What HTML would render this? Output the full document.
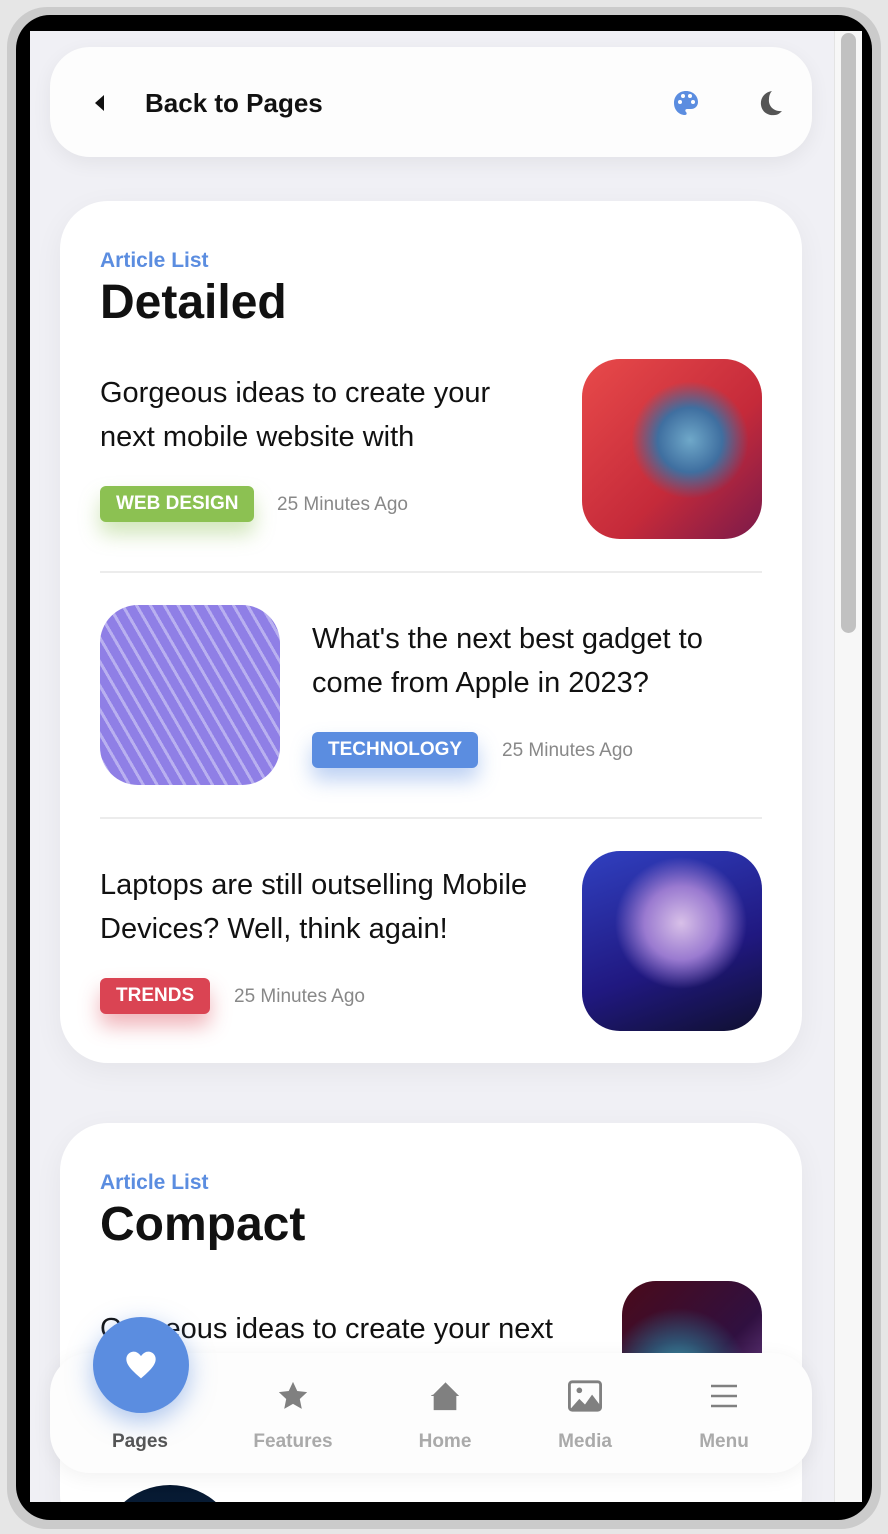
<!DOCTYPE html>
<html><head><meta charset="utf-8"><style>
*{box-sizing:border-box;margin:0;padding:0}
html,body{width:888px;height:1534px;overflow:hidden}
body{background:#e6e6e6;position:relative;font-family:"Liberation Sans",sans-serif}
.outer{position:absolute;left:7px;top:7px;width:874px;height:1522px;border-radius:40px;background:#cbcbcb}
.frame{position:absolute;left:16px;top:15px;width:856px;height:1505px;border-radius:34px;background:#000}
.screen{position:absolute;left:30px;top:31px;width:832px;height:1471px;background:#f0f0f5;overflow:hidden}
.sb{position:absolute;left:804px;top:0;width:28px;height:1471px;background:#f7f7f7;border-left:1px solid #e4e4e4;z-index:8}
.thumb{position:absolute;left:811px;top:2px;width:15px;height:600px;border-radius:8px;background:#c1c1c1;z-index:9}
.hdr{position:absolute;left:20px;top:16px;width:762px;height:110px;border-radius:40px;background:#fdfdfd;box-shadow:0 6px 20px rgba(0,0,0,.06)}
.hdr .t{position:absolute;left:95px;top:41px;font-size:26px;font-weight:bold;color:#111}
.card{position:absolute;left:30px;width:742px;background:#fff;border-radius:48px;box-shadow:0 8px 30px rgba(0,0,0,.05);z-index:1}
.sub{position:absolute;left:40px;font-size:21px;font-weight:bold;color:#5b8de0}
.h{position:absolute;left:40px;font-size:48px;font-weight:bold;color:#111;letter-spacing:0}
.ttl{position:absolute;font-size:29px;color:#111;line-height:44px;letter-spacing:0}
.tag{position:absolute;height:36px;line-height:36px;padding:0 16px;border-radius:6px;color:#fff;font-weight:bold;font-size:19px}
.time{position:absolute;font-size:19px;color:#888}
.img{position:absolute;width:180px;height:180px;border-radius:38px;overflow:hidden}
.sep{position:absolute;left:40px;width:662px;height:2px;background:#ececec}
.nav{position:absolute;left:20px;top:1322px;width:762px;height:120px;border-radius:40px;background:#fdfdfd;box-shadow:0 4px 20px rgba(0,0,0,.06);z-index:5}
.ni{position:absolute;top:78px;font-size:19px;font-weight:bold;color:#aaa;transform:translateX(-50%)}
</style></head><body>
<div class="outer"></div><div class="frame"></div>
<div class="screen">
<div class="hdr">
<svg style="position:absolute;left:44px;top:48px" width="12" height="16"><path d="M10 0V16L1 8Z" fill="#111"/></svg>
<div class="t">Back to Pages</div>
<svg style="position:absolute;left:622px;top:42px" width="28" height="28" viewBox="0 0 28 28"><path d="M14 2C7 2 2 7 2 14s5 12 11 12c2 0 2-2 1-3s-1-3 1-3h4c4 0 7-3 7-7C26 7 21 2 14 2z" fill="#5b8de0"/><circle cx="8" cy="13" r="2" fill="#fff"/><circle cx="11" cy="7" r="2" fill="#fff"/><circle cx="18" cy="7" r="2" fill="#fff"/><circle cx="21" cy="13" r="2" fill="#fff"/></svg>
<svg style="position:absolute;left:706px;top:42px" width="28" height="28" viewBox="0 0 28 28"><path d="M16 2C9 3 4 9 5 16s7 11 14 10c3 0 5-2 7-4-8 1-14-5-13-12 0-3 1-6 3-8z" fill="#555"/></svg>
</div>

<div class="card" style="top:170px;height:862px">
<div class="sub" style="top:48px">Article List</div>
<div class="h" style="top:74px">Detailed</div>

<div class="ttl" style="left:40px;top:170px">Gorgeous ideas to create your<br>next mobile website with</div>
<div class="tag" style="left:40px;top:285px;background:#8cc152;box-shadow:0 12px 20px rgba(140,193,82,.4)">WEB DESIGN</div>
<div class="time" style="left:217px;top:293px">25 Minutes Ago</div>
<div class="img" style="left:522px;top:158px;background:radial-gradient(circle at 60% 45%,#6fa8c9 0,#3f6fa0 22%,transparent 40%),linear-gradient(135deg,#e84a4a,#c52a3a 60%,#7a1a4a)"></div>
<div class="sep" style="top:370px"></div>

<div class="img" style="left:40px;top:404px;background:repeating-linear-gradient(60deg,#b9b0f0 0 3px,#8f7fe6 3px 12px),linear-gradient(135deg,#9b8bea,#7d6fe0)"></div>
<div class="ttl" style="left:252px;top:416px">What's the next best gadget to<br>come from Apple in 2023?</div>
<div class="tag" style="left:252px;top:531px;background:#5b8de0;box-shadow:0 12px 20px rgba(91,141,224,.4)">TECHNOLOGY</div>
<div class="time" style="left:442px;top:539px">25 Minutes Ago</div>
<div class="sep" style="top:616px"></div>

<div class="ttl" style="left:40px;top:662px">Laptops are still outselling Mobile<br>Devices? Well, think again!</div>
<div class="tag" style="left:40px;top:777px;background:#da4453;box-shadow:0 12px 20px rgba(218,68,83,.4)">TRENDS</div>
<div class="time" style="left:174px;top:785px">25 Minutes Ago</div>
<div class="img" style="left:522px;top:650px;background:radial-gradient(circle at 55% 40%,#d8c0e8 0,#9a7ad0 25%,transparent 45%),linear-gradient(160deg,#3040c0,#201880 60%,#101030)"></div>
</div>

<div class="card" style="top:1092px;height:420px">
<div class="sub" style="top:48px">Article List</div>
<div class="h" style="top:74px">Compact</div>
<div class="ttl" style="left:40px;top:184px">Gorgeous ideas to create your next</div>
<div class="img" style="left:562px;top:158px;width:140px;height:140px;border-radius:34px;background:radial-gradient(circle at 40% 70%,#40b0c0 0,#305070 30%,transparent 55%),linear-gradient(135deg,#4a0a1a,#301040 60%,#8050a0)"></div>
<div class="img" style="left:40px;top:362px;width:140px;height:140px;border-radius:70px;background:linear-gradient(#061830,#103050)"></div>
</div>

<div class="nav">
<svg style="position:absolute;left:226px;top:26px" width="34" height="34" viewBox="0 0 24 24"><path d="M12 2l3 6.5 7 .8-5.2 4.8 1.4 7L12 17.6 5.8 21.1l1.4-7L2 9.3l7-.8z" fill="#808080"/></svg>
<svg style="position:absolute;left:378px;top:26px" width="34" height="34" viewBox="0 0 24 24"><path d="M12 2L2 12h2v10h16V12h2z" fill="#808080"/><path d="M12 2L3 11" stroke="#fff" stroke-width="1"/></svg>
<svg style="position:absolute;left:518px;top:27px" width="34" height="32" viewBox="0 0 24 22"><rect x="1" y="1" width="22" height="20" rx="2" fill="none" stroke="#808080" stroke-width="2"/><circle cx="8" cy="7" r="2" fill="#808080"/><path d="M1 21l7-8 4 4 5-7 6 8v3z" fill="#808080"/></svg>
<svg style="position:absolute;left:660px;top:30px" width="28" height="26"><path d="M1 3h26M1 13h26M1 23h26" stroke="#808080" stroke-width="2.5"/></svg>
<div class="ni" style="left:90px;color:#555">Pages</div>
<div class="ni" style="left:243px">Features</div>
<div class="ni" style="left:395px">Home</div>
<div class="ni" style="left:535px">Media</div>
<div class="ni" style="left:674px">Menu</div>
</div>
<div style="position:absolute;z-index:6;left:63px;top:1286px;width:96px;height:96px;border-radius:50%;background:#5b8de0;box-shadow:0 8px 25px rgba(91,141,224,.5)">
<svg style="position:absolute;left:32px;top:33px" width="32" height="30" viewBox="0 0 24 22"><path d="M12 21C5 15 1 11 1 6.5 1 3.5 3.5 1 6.5 1c2.2 0 4 1.3 5.5 3.3C13.5 2.3 15.3 1 17.5 1 20.5 1 23 3.5 23 6.5 23 11 19 15 12 21z" fill="#fff"/></svg>
</div>

<div class="sb"></div><div class="thumb"></div>
</div>
</body></html>
